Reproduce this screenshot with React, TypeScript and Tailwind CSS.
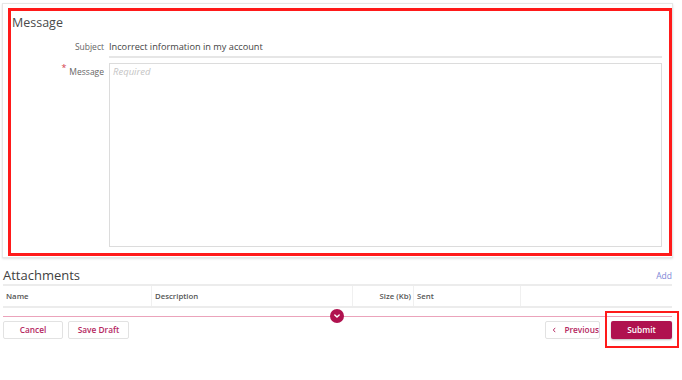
import React from "react";

export default function App() {
  return (
    <div
      className="relative w-[682px] h-[380px] bg-white overflow-hidden"
      style={{ fontFamily: '"Open Sans", "Liberation Sans", sans-serif' }}
    >
      {/* Message card */}
      <div className="relative ml-[2px] mt-[3px] w-[671px] h-[255px] border border-[#e6e6e6] shadow-[0_1px_2px_rgba(0,0,0,0.12)] bg-white pr-[10px]">
        <div className="pl-[9px] pt-[10px] h-[28px] text-[12.5px] leading-[18px] text-[#4a4a4a] font-medium">
          Message
        </div>
        <div className="flex mt-[4px]">
          <div className="w-[101px] text-right text-[8.5px] leading-[22px] text-[#666]">Subject</div>
          <div className="ml-[5px] flex-1 h-[22px] border-b-2 border-[#e6e6e6] text-[9.2px] leading-[21px] text-[#444]">
            Incorrect information in my account
          </div>
        </div>
        <div className="flex mt-[5px]">
          <div className="w-[101px] flex justify-end items-start pt-[1px]">
            <span className="text-[#d43a4a] text-[9px] leading-[8px] mr-[3px]">*</span>
            <span className="text-[8.5px] leading-[14px] text-[#666] mt-[1px]">Message</span>
          </div>
          <div className="ml-[5px] flex-1 h-[184px] border border-[#dcdcdc] px-[3px] pt-[1px] leading-[14px]">
            <div className="text-[9.5px] italic text-[#c4c4c4] leading-[14px]">Required</div>
          </div>
        </div>
      </div>

      {/* Attachments */}
      <div className="ml-[3px] mr-[10px] mt-[8px]">
        <div className="flex items-end justify-between h-[18px]">
          <span className="text-[13px] leading-[18px] text-[#3f3f3f] font-medium">Attachments</span>
          <span className="text-[8.5px] leading-[14px] text-[#7d86d6] pb-[1px]">Add</span>
        </div>
        <div className="border-t-2 border-b-2 border-[#ececec] h-[24px] flex text-[7.8px] leading-[20px] text-[#555] font-semibold">
          <div className="w-[149px] pl-[3px] border-r border-[#f0f0f0]">Name</div>
          <div className="w-[201px] pl-[3px] border-r border-[#f0f0f0]">Description</div>
          <div className="w-[61px] pr-[2px] text-right border-r border-[#f0f0f0]">Size (Kb)</div>
          <div className="w-[107px] pl-[3px] border-r border-[#f0f0f0]">Sent</div>
          <div className="flex-1" />
        </div>
        {/* pink divider with toggle */}
        <div className="relative mt-[8px] h-px bg-[#eba3bb]">
          <div className="absolute left-[327px] top-[-7px] w-[14px] h-[14px] rounded-full bg-[#b0124f] flex items-center justify-center">
            <svg width="8" height="8" viewBox="0 0 8 8" fill="none">
              <path d="M1.8 2.9 L4 5.1 L6.2 2.9" stroke="white" strokeWidth="1.4" strokeLinecap="round" strokeLinejoin="round" />
            </svg>
          </div>
        </div>
        {/* buttons */}
        <div className="mt-[4px] flex items-center">
          <button className="w-[60px] h-[18px] border border-[#e2e2e2] rounded-[2px] text-[8.3px] font-semibold text-[#b5285f] bg-white">
            Cancel
          </button>
          <button className="ml-[5px] w-[61px] h-[18px] border border-[#e2e2e2] rounded-[2px] text-[8.3px] font-semibold text-[#b5285f] bg-white">
            Save Draft
          </button>
          <div className="flex-1" />
          <button className="w-[55px] h-[18px] border border-[#e2e2e2] rounded-[2px] text-[8.3px] font-semibold text-[#b5285f] bg-white flex items-center pl-[6px]">
            <svg width="6" height="8" viewBox="0 0 6 8" fill="none" className="mr-[8px]">
              <path d="M4 1.5 L1.8 4 L4 6.5" stroke="#b5285f" strokeWidth="1.3" strokeLinecap="round" strokeLinejoin="round" />
            </svg>
            Previous
          </button>
          <button className="ml-[11px] w-[61px] h-[18px] rounded-[2px] text-[8.3px] font-semibold text-white bg-[#b0124f] shadow-[0_1px_2px_rgba(0,0,0,0.25)]">
            Submit
          </button>
        </div>
      </div>

      {/* annotation boxes */}
      <div className="absolute left-[8px] top-[8px] w-[664px] h-[248px] border-[3px] border-[#ff1a1a] pointer-events-none" />
      <div className="absolute left-[605px] top-[311px] w-[74px] h-[37px] border-2 border-[#ff1a1a] pointer-events-none" />
    </div>
  );
}
